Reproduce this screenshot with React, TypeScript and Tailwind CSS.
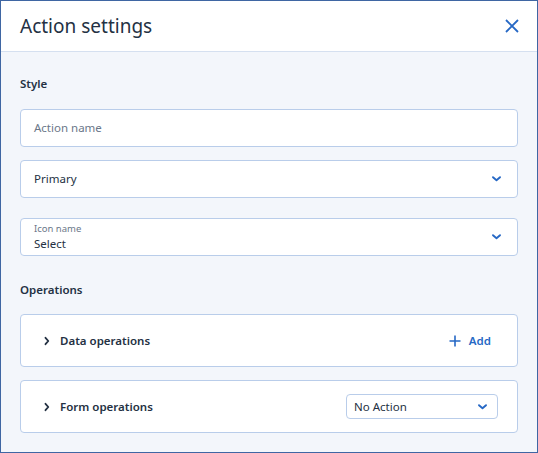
import React from 'react';

const ChevronDown = () => (
  <svg width="9" height="6" viewBox="0 0 9 6" fill="none">
    <path d="M1 1.2l3.5 3L8 1.2" stroke="#2668c5" strokeWidth="1.9" strokeLinecap="round" strokeLinejoin="round" />
  </svg>
);

const ChevronRight = () => (
  <svg width="6" height="10" viewBox="0 0 6 10" fill="none">
    <path d="M1.5 1.8L4.3 5l-2.8 3.2" stroke="#243143" strokeWidth="1.8" strokeLinecap="round" strokeLinejoin="round" />
  </svg>
);

const App = () => {
  return (
    <div
      className="w-[538px] h-[453px] border border-[#3f66a3] bg-[#f3f6fb] flex flex-col text-[#243143] overflow-hidden"
      style={{ fontFamily: '"Noto Sans", "Open Sans", sans-serif' }}
    >
      {/* header */}
      <div className="h-[51px] shrink-0 bg-white border-b border-[#d5e0f0] flex items-center justify-between pl-[19px] pr-[16px]">
        <h1 className="text-[19px] leading-[28px] text-[#243143]">Action settings</h1>
        <button className="w-[18px] h-[18px] flex items-center justify-center">
          <svg width="14" height="14" viewBox="0 0 14 14" fill="none">
            <path d="M1 1l12 12M13 1L1 13" stroke="#2668c5" strokeWidth="1.8" />
          </svg>
        </button>
      </div>

      <div className="flex-1 px-[19px] pt-[24px]">
        <div className="text-[11.5px] leading-[16px] font-semibold">Style</div>

        <div className="mt-[17px] h-[38px] rounded-[4px] border border-[#b9cdea] bg-white flex items-center px-[13px]">
          <span className="text-[11.5px] text-[#6b7789]">Action name</span>
        </div>

        <div className="mt-[13px] h-[38px] rounded-[4px] border border-[#b9cdea] bg-white flex items-center justify-between pl-[13px] pr-[16px]">
          <span className="text-[11.5px] text-[#243143]">Primary</span>
          <ChevronDown />
        </div>

        <div className="mt-[20px] h-[38px] rounded-[4px] border border-[#b9cdea] bg-white flex items-center justify-between pl-[13px] pr-[16px]">
          <div className="flex flex-col">
            <span className="text-[9.5px] leading-[13px] text-[#6b7789]">Icon name</span>
            <span className="text-[11.5px] leading-[17px] text-[#243143]">Select</span>
          </div>
          <ChevronDown />
        </div>

        <div className="mt-[26px] text-[11.5px] leading-[16px] font-semibold">Operations</div>

        <div className="mt-[16px] h-[53px] rounded-[4px] border border-[#b9cdea] bg-white flex items-center justify-between pl-[23px] pr-[26px]">
          <div className="flex items-center gap-[10px]">
            <ChevronRight />
            <span className="text-[11.5px] font-semibold">Data operations</span>
          </div>
          <button className="flex items-center gap-[8px] text-[#2668c5] text-[11.5px] font-semibold">
            <svg width="12" height="12" viewBox="0 0 12 12" fill="none">
              <path d="M6 0.5v11M0.5 6h11" stroke="#2668c5" strokeWidth="1.6" />
            </svg>
            Add
          </button>
        </div>

        <div className="mt-[13px] h-[53px] rounded-[4px] border border-[#b9cdea] bg-white flex items-center justify-between pl-[23px] pr-[19px]">
          <div className="flex items-center gap-[10px]">
            <ChevronRight />
            <span className="text-[11.5px] font-semibold">Form operations</span>
          </div>
          <div className="w-[152px] h-[25px] rounded-[4px] border border-[#b9cdea] bg-white flex items-center justify-between pl-[7px] pr-[10px]">
            <span className="text-[11.5px] text-[#243143]">No Action</span>
            <ChevronDown />
          </div>
        </div>
      </div>
    </div>
  );
};

export default App;
